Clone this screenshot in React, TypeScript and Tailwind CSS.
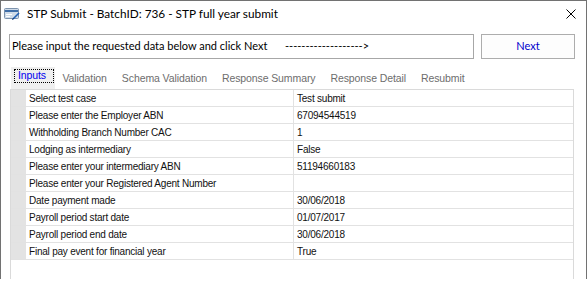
const rows: [string, string][] = [
  ['Select test case', 'Test submit'],
  ['Please enter the Employer ABN', '67094544519'],
  ['Withholding Branch Number CAC', '1'],
  ['Lodging as intermediary', 'False'],
  ['Please enter your intermediary ABN', '51194660183'],
  ['Please enter your Registered Agent Number', ''],
  ['Date payment made', '30/06/2018'],
  ['Payroll period start date', '01/07/2017'],
  ['Payroll period end date', '30/06/2018'],
  ['Final pay event for financial year', 'True'],
];

const tabs = ['Validation', 'Schema Validation', 'Response Summary', 'Response Detail', 'Resubmit'];

function AppIcon() {
  return (
    <svg width="17" height="14" viewBox="0 0 17 14">
      <rect x="0.5" y="1.5" width="14" height="10" rx="1" fill="#cfdbe8" stroke="#7d93ad" />
      <rect x="1" y="3" width="13" height="2" fill="#3f6ea8" />
      <rect x="2" y="7" width="6" height="1" fill="#ffffff" />
      <rect x="2" y="9" width="4" height="1" fill="#ffffff" />
      <path d="M9 12 L15 6" stroke="#1f5fb4" strokeWidth="1.6" />
      <path d="M8.5 12.8 L9.4 11.2" stroke="#0a2d66" strokeWidth="1" />
    </svg>
  );
}

export default function App() {
  return (
    <div className="w-[588px] h-[282px] bg-white overflow-hidden">
      <div className="w-[587px] h-[279px] border border-b-0 border-[#727272] flex flex-col bg-white">
        <div className="h-[25px] flex items-center pl-[3px] pr-[10px]">
          <AppIcon />
          <span className="ml-[6px] text-[11.8px] text-black font-['Lato',sans-serif] leading-none">
            STP Submit - BatchID: 736 - STP full year submit
          </span>
          <svg className="ml-auto" width="10" height="10" viewBox="0 0 10 10">
            <path d="M0.5 0.5 L9.5 9.5 M9.5 0.5 L0.5 9.5" stroke="#000" strokeWidth="1" />
          </svg>
        </div>

        <div className="mt-[8px] ml-[8px] flex gap-[7px]">
          <div className="w-[465px] h-[25px] border border-[#a7a7a7] flex items-center pl-[2px] text-black font-['Lato',sans-serif] whitespace-nowrap text-[11px]">
            <span className="w-[273px] shrink-0">Please input the requested data below and click Next</span>
            <span>{'------------------->'}</span>
          </div>
          <button className="w-[94px] h-[25px] border border-[#adadad] bg-[#fdfdfd] text-[11px] text-[#0000cc] font-['Lato',sans-serif]">
            Next
          </button>
        </div>

        <div className="mt-[8px] ml-[10px] h-[22px] flex font-['Liberation_Sans',sans-serif] text-[10.5px] tracking-[-0.1px]">
          <div className="w-[44px] h-[22px] bg-[#efefef] pt-[2px] pl-[3px]">
            <div className="w-[40px] h-[14px] border border-dotted border-black flex items-center pl-[3px] text-[#0000ee]">
              Inputs
            </div>
          </div>
          <div className="flex">
            {tabs.map((t) => (
              <div key={t} className="px-[7.5px] pt-[4px] text-[#6d6d6d]">
                {t}
              </div>
            ))}
          </div>
        </div>

        <div className="ml-[9px] w-[564px] flex-1 border-l border-r border-t border-[#dadada] font-['Liberation_Sans',sans-serif] text-[10px] tracking-[-0.22px] text-[#111]">
          {rows.map(([k, v]) => (
            <div key={k} className="h-[17px] flex border-b border-[#e2e2e2]">
              <div className="w-[15px] bg-[#e3e3e3]" />
              <div className="w-[268px] border-r border-[#e2e2e2] pl-[3px] flex items-center">{k}</div>
              <div className="flex-1 pl-[3px] flex items-center">{v}</div>
            </div>
          ))}
        </div>
      </div>
    </div>
  );
}
